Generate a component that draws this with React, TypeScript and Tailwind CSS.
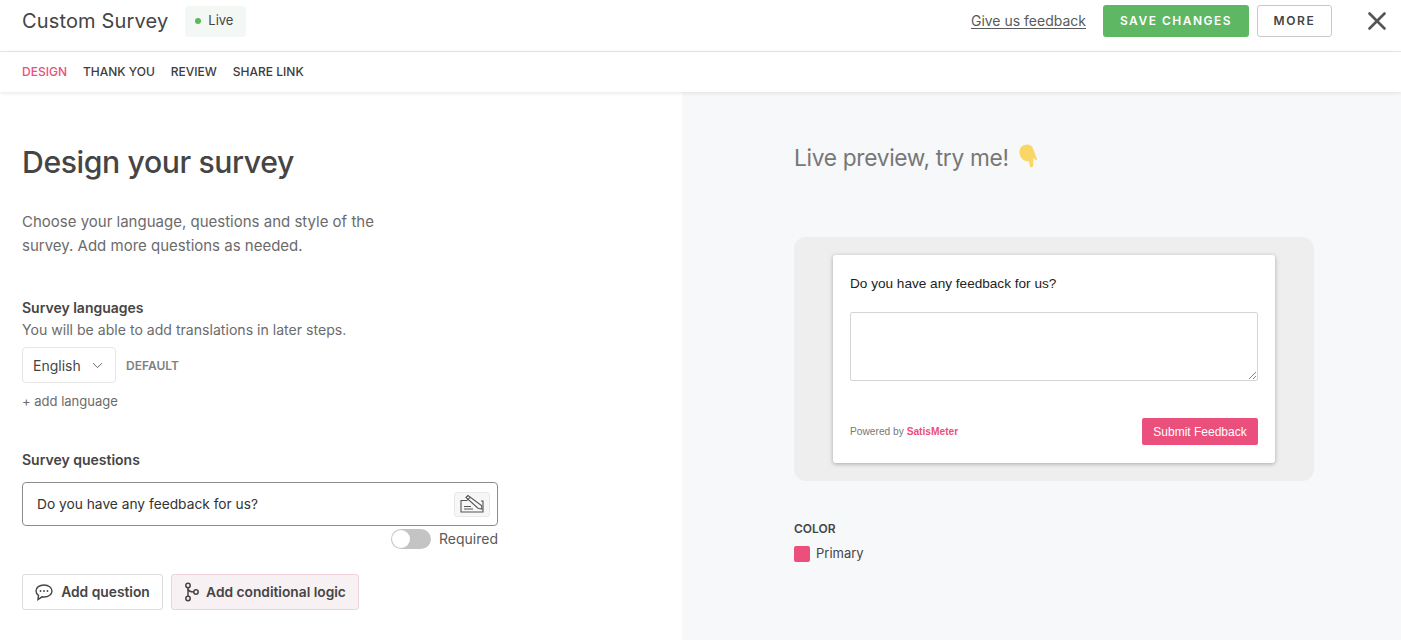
import { ChevronDown, X } from "lucide-react";

const SURVEY_FONT = "font-['Inter','Liberation_Sans',sans-serif]";

const NoEditIcon = () => (
  <svg width="26" height="20" viewBox="0 0 26 20" fill="none" stroke="#555" strokeWidth="1.100">
    <path d="M8.500 6.500H2v11.500h22V7h-2" />
    <path d="M5 12.500h7M5 15h9" />
    <path d="M7 3.500 9 1.500 22.500 11.500l.5 3.500-3.700-.5z" />
    <path d="M8.500 6 11 3.300" />
  </svg>
);

const PointingHand = () => (
  <svg width="20" height="24" viewBox="0 0 20 24" fill="#f9d766">
    <path d="M0.500 9C0 4 3.500 0.500 8 0.500c3 0 5 1.500 6 4l4 10.500c.3 1-.8 1.500-1.500.8L14.500 13.500 14 22c-.2 1.800-3 1.800-3.200 0L10 17.500C5 17.500 1 14 0.500 9z" />
  </svg>
);

const ChatIcon = () => (
  <svg width="18" height="17" viewBox="0 0 18 17" fill="none" stroke="#454545" strokeWidth="1.400" className="mr-[8px]">
    <path d="M9 1C4.500 1 1 3.500 1 7c0 1.800 1 3.400 2.500 4.400L3 15.500l4-2.700c.6.100 1.300.200 2 .200 4.500 0 8-2.600 8-6S13.500 1 9 1z" />
    <circle cx="5.500" cy="7" r="0.900" fill="#454545" stroke="none" />
    <circle cx="9" cy="7" r="0.900" fill="#454545" stroke="none" />
    <circle cx="12.500" cy="7" r="0.900" fill="#454545" stroke="none" />
  </svg>
);

const BranchIcon = () => (
  <svg width="16" height="20" viewBox="0 0 16 20" fill="none" stroke="#454545" strokeWidth="1.500" className="mr-[6px]">
    <circle cx="4" cy="3.500" r="2.200" />
    <circle cx="4" cy="16.500" r="2.200" />
    <circle cx="12" cy="10" r="2.200" />
    <path d="M4 5.700v8.600" />
    <path d="M4 7c.5 2 2.500 3 5.800 3" />
  </svg>
);

const Header = () => (
  <header className="flex h-[52px] items-center justify-between border-b border-[#e8e8e8] pl-[22px] pr-[9px] pb-[10px]">
    <div className="flex items-center">
      <h1 className="text-[20px] leading-7 tracking-[0.15px] text-[#454545]">Custom Survey</h1>
      <div className="ml-[17px] mt-px flex h-[31px] w-[61px] items-center rounded-[4px] bg-[#f3f8f4] pl-[10px] text-[13px] text-[#454545]">
        <span className="mr-[7px] h-[6px] w-[6px] rounded-full bg-[#5cb85c]" />
        Live
      </div>
    </div>
    <div className="flex items-center">
      <a className="text-[14px] text-[#5a5a5a] underline underline-offset-2">Give us feedback</a>
      <button className="ml-[17px] h-[32px] w-[146px] rounded-[3px] bg-[#5eb762] text-[12px] font-semibold tracking-[1.500px] text-white">
        SAVE CHANGES
      </button>
      <button className="ml-2 h-[32px] w-[75px] rounded-[3px] border border-[#c8c8c8] bg-white text-[12px] font-semibold tracking-[1.600px] text-[#454545]">
        MORE
      </button>
      <X className="ml-[30px] h-[30px] w-[30px] text-[#555]" strokeWidth={2.100} />
    </div>
  </header>
);

const Tabs = () => (
  <nav className="relative z-10 flex h-[40px] items-center gap-4 bg-white pl-[22px] text-[12px] font-medium text-[#3c3c3c] shadow-[0_1px_4px_rgba(0,0,0,0.1)]">
    <span className="text-[#eb4f7b]">DESIGN</span>
    <span>THANK YOU</span>
    <span>REVIEW</span>
    <span>SHARE LINK</span>
  </nav>
);

const LeftPane = () => (
  <section className="h-[548px] w-[682px] overflow-hidden bg-white pl-[22px] pt-[50px]">
    <h2 className="text-[30.200px] leading-10 font-medium tracking-[-0.400px] text-[#454545]">Design your survey</h2>
    <p className="mt-[28px] w-[360px] text-[15px] leading-6 text-[#6b6b6b]">
      Choose your language, questions and style of the survey. Add more questions as needed.
    </p>
    <h3 className="mt-[40px] text-[14px] leading-5 font-semibold text-[#454545]">Survey languages</h3>
    <p className="mt-[2px] text-[14.100px] leading-[20px] text-[#6b6b6b]">You will be able to add translations in later steps.</p>
    <div className="mt-[7px] flex items-center">
      <div className="flex h-[36px] w-[94px] items-center justify-between rounded-[4px] border border-[#e6e6e6] pl-[10px] pr-[9px] text-[14px] text-[#454545]">
        English
        <ChevronDown className="h-[17px] w-[17px] text-[#555]" strokeWidth={1.250} />
      </div>
      <span className="ml-[10px] mt-px text-[12px] font-semibold text-[#808080]">DEFAULT</span>
    </div>
    <p className="mt-2 text-[13px] leading-5 text-[#6b6b6b]">+ add language</p>
    <h3 className="mt-[39px] text-[14px] leading-5 font-semibold text-[#454545]">Survey questions</h3>
    <div className="mt-[12px] flex h-[44px] w-[476px] items-center justify-between rounded-[4px] border border-[#8c8c8c] pl-[14px] pr-[7px] text-[13.750px] text-[#333]">
      Do you have any feedback for us?
      <div className="flex h-[25px] w-[36px] items-center justify-center rounded-[3px] border border-[#e8e8e8] bg-[#f7f7f7]">
        <NoEditIcon />
      </div>
    </div>
    <div className="mt-[3px] flex w-[476px] items-center justify-end text-[14px] leading-5 text-[#5a5a5a]">
      <span className="flex h-[20px] w-[40px] items-center rounded-full bg-[#c4c4c4] pl-[1px]">
        <span className="h-[18px] w-[18px] rounded-full bg-white" />
      </span>
      <span className="ml-2">Required</span>
    </div>
    <div className="mt-[25px] flex gap-2">
      <button className="flex h-[36px] w-[141px] items-center justify-center rounded-[3px] border border-[#dcdcdc] bg-white text-[13.800px] font-semibold text-[#454545]">
        <ChatIcon />
        Add question
      </button>
      <button className="flex h-[36px] w-[188px] items-center justify-center rounded-[3px] border border-[#edd3da] bg-[#f8f1f3] text-[13.750px] font-semibold text-[#454545]">
        <BranchIcon />
        Add conditional logic
      </button>
    </div>
  </section>
);

const SurveyPreview = () => (
  <div className="mt-[63px] flex h-[244px] w-[520px] justify-center rounded-[12px] bg-[#eeeeee] pt-[18px]">
    <div className="flex h-[208px] w-[442px] flex-col rounded-[3px] bg-white px-[17px] shadow-[0_1px_4px_rgba(0,0,0,0.3)] font-['Liberation_Sans',sans-serif]">
      <p className="mt-[20px] text-[13.600px] leading-[18px] text-[#222]">Do you have any feedback for us?</p>
      <div className="relative mt-[19px] h-[69px] w-[408px] rounded-[2px] border border-[#d5d5d5]">
        <svg className="absolute bottom-[1px] right-[1px]" width="7" height="7" viewBox="0 0 7 7" stroke="#666" strokeWidth="0.800">
          <path d="M0 7 7 0M4 7l3-3" />
        </svg>
      </div>
      <div className="mt-[37px] flex items-center justify-between">
        <span className="text-[10.200px] text-[#777]">
          Powered by <b className="text-[#eb4f7b]">SatisMeter</b>
        </span>
        <button className="h-[27px] w-[116px] rounded-[2px] bg-[#eb4f7b] text-[12px] text-white">Submit Feedback</button>
      </div>
    </div>
  </div>
);

const RightPane = () => (
  <section className="h-[548px] flex-1 overflow-hidden bg-[#f7f8fa] pl-[112px] pt-[50px]">
    <div className="flex h-8 items-center">
      <h2 className="text-[22.700px] leading-8 tracking-[-0.300px] text-[#777]">Live preview, try me!</h2>
      <span className="ml-[10px] -mt-1"><PointingHand /></span>
    </div>
    <SurveyPreview />
    <h3 className="mt-[40px] text-[12px] leading-4 font-semibold text-[#454545]">COLOR</h3>
    <div className="mt-[7px] flex items-center text-[13px] text-[#454545]">
      <span className="mr-[6px] h-4 w-4 rounded-[2px] bg-[#eb4f7b]" />
      Primary
    </div>
  </section>
);

export default function App() {
  return (
    <div className={`${SURVEY_FONT} h-[640px] w-[1401px] overflow-hidden bg-white`}>
      <Header />
      <Tabs />
      <main className="flex">
        <LeftPane />
        <RightPane />
      </main>
    </div>
  );
}
